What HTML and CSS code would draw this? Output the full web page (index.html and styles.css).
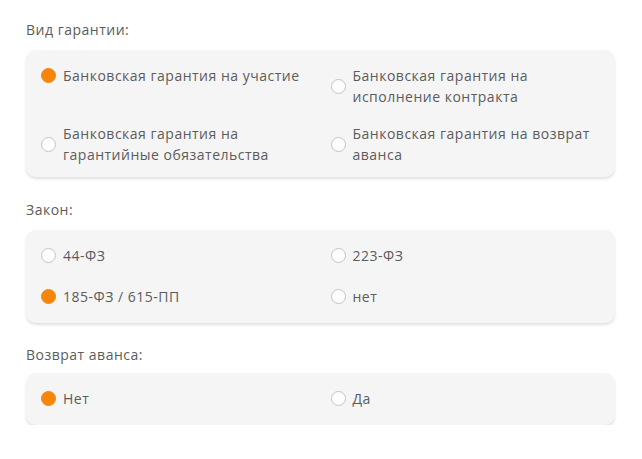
FILE: index.html
```html
<!DOCTYPE html>
<html lang="ru">
<head>
<meta charset="utf-8">
<link rel="stylesheet" href="styles.css">
</head>
<body>
<div class="form">
  <div class="group">
    <div class="label">Вид гарантии:</div>
    <div class="card card-wide">
      <label class="opt"><span class="radio checked"></span><span class="txt">Банковская гарантия на участие</span></label>
      <label class="opt center"><span class="radio"></span><span class="txt">Банковская гарантия на<br>исполнение контракта</span></label>
      <label class="opt center"><span class="radio"></span><span class="txt">Банковская гарантия на<br>гарантийные обязательства</span></label>
      <label class="opt center"><span class="radio"></span><span class="txt">Банковская гарантия на возврат<br>аванса</span></label>
    </div>
  </div>
  <div class="group">
    <div class="label">Закон:</div>
    <div class="card">
      <label class="opt center"><span class="radio"></span><span class="txt">44-ФЗ</span></label>
      <label class="opt center"><span class="radio"></span><span class="txt">223-ФЗ</span></label>
      <label class="opt center"><span class="radio checked"></span><span class="txt">185-ФЗ / 615-ПП</span></label>
      <label class="opt center"><span class="radio"></span><span class="txt">нет</span></label>
    </div>
  </div>
  <div class="group group-tight">
    <div class="label">Возврат аванса:</div>
    <div class="card">
      <label class="opt center"><span class="radio checked"></span><span class="txt">Нет</span></label>
      <label class="opt center"><span class="radio"></span><span class="txt">Да</span></label>
    </div>
  </div>
</div>
</body>
</html>
```
FILE: styles.css
```css
html, body {
  margin: 0;
  padding: 0;
  background: #ffffff;
}
body {
  font-family: "Open Sans", "Noto Sans", sans-serif;
  font-size: 14px;
  letter-spacing: 0.5px;
  color: #5c5c5c;
}
.form {
  padding: 20px 27px 0 26px;
  display: flex;
  flex-direction: column;
  gap: 23px;
}
.label {
  line-height: 20px;
  margin-bottom: 10px;
  color: #5c5c5c;
}
.group-tight {
  margin-top: -1px;
}
.group-tight .label {
  margin-bottom: 8px;
}
.card {
  background: #f5f5f5;
  border-radius: 10px;
  box-shadow: 0 2px 3px rgba(0, 0, 0, 0.12);
  padding: 15px 15px 16px;
  display: grid;
  grid-template-columns: 1fr 1fr;
  column-gap: 20px;
  row-gap: 20px;
}
.card-wide {
  row-gap: 16px;
  padding-bottom: 12px;
}
.opt {
  display: flex;
  align-items: flex-start;
  gap: 7px;
  line-height: 21px;
}
.opt.center {
  align-items: center;
}
.radio {
  flex: none;
  width: 15px;
  height: 15px;
  box-sizing: border-box;
  border-radius: 50%;
  border: 1px solid #c4c4c4;
  background: #ffffff;
  margin-top: 3px;
}
.opt.center .radio {
  margin-top: 0;
}
.radio.checked {
  background: #f5860b;
  border-color: #f5860b;
}
.txt {
  color: #5c5c5c;
}
```
